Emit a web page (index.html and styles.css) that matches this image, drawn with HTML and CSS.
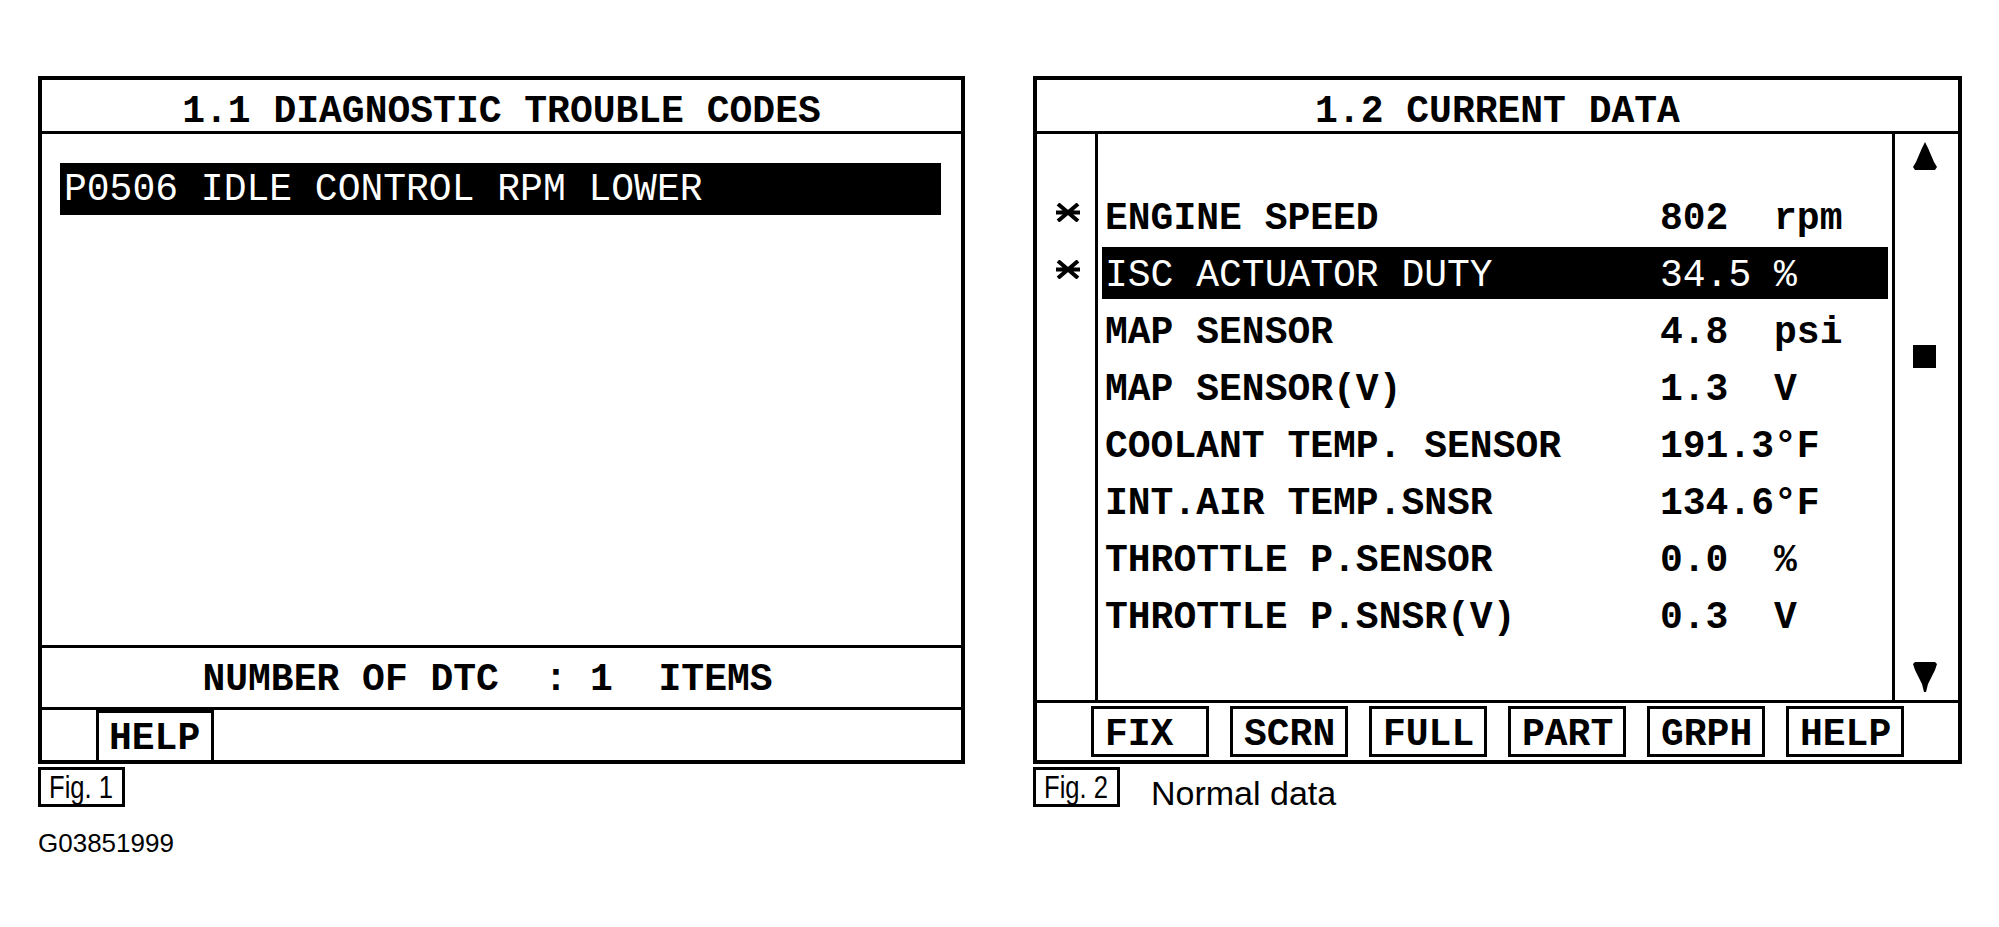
FILE: index.html
```html
<!DOCTYPE html>
<html>
<head>
<meta charset="utf-8">
<title>Scan tool screens</title>
<link rel="stylesheet" href="styles.css">
</head>
<body>
<div class="page">
  <section class="fig fig-left">
    <div class="screen dtc">
      <div class="title">1.1 DIAGNOSTIC TROUBLE CODES</div>
      <div class="dtc-body">
        <div class="dtc-item sel">P0506 IDLE CONTROL RPM LOWER</div>
      </div>
      <div class="dtc-count">NUMBER OF DTC  : 1  ITEMS</div>
      <div class="keys keys-left">
        <span class="key key-left">HELP</span>
      </div>
    </div>
    <div class="caption">
      <span class="fig-tag"><span class="fig-txt">Fig. 1</span></span>
    </div>
    <div class="code">G03851999</div>
  </section>

  <section class="fig fig-right">
    <div class="screen data">
      <div class="title">1.2 CURRENT DATA</div>
      <div class="data-body">
        <div class="marks">
          <div class="mark"><svg class="star" viewBox="0 0 24 19" width="24" height="19"><path d="M2 1 L22 18 M22 1 L2 18 M0 9.5 H24" stroke="#000" stroke-width="4" fill="none"/></svg></div>
          <div class="mark"><svg class="star" viewBox="0 0 24 19" width="24" height="19"><path d="M2 1 L22 18 M22 1 L2 18 M0 9.5 H24" stroke="#000" stroke-width="4" fill="none"/></svg></div>
        </div>
        <div class="rows">
          <div class="row"><span class="lbl">ENGINE SPEED</span><span class="val">802  rpm</span></div>
          <div class="row sel"><span class="lbl">ISC ACTUATOR DUTY</span><span class="val">34.5 %</span></div>
          <div class="row"><span class="lbl">MAP SENSOR</span><span class="val">4.8  psi</span></div>
          <div class="row"><span class="lbl">MAP SENSOR(V)</span><span class="val">1.3  V</span></div>
          <div class="row"><span class="lbl">COOLANT TEMP. SENSOR</span><span class="val">191.3°F</span></div>
          <div class="row"><span class="lbl">INT.AIR TEMP.SNSR</span><span class="val">134.6°F</span></div>
          <div class="row"><span class="lbl">THROTTLE P.SENSOR</span><span class="val">0.0  %</span></div>
          <div class="row"><span class="lbl">THROTTLE P.SNSR(V)</span><span class="val">0.3  V</span></div>
        </div>
        <div class="scroll">
          <svg class="arrow-up" viewBox="0 0 24 28" width="24" height="28"><path d="M12 0 L15 6 L21 20 L24 25 L22 28 L2 28 L0 25 L3 20 L9 6 Z" fill="#000"/></svg>
          <span class="thumb"></span>
          <svg class="arrow-down" viewBox="0 0 24 30" width="24" height="30"><path d="M0 2 L2 0 L22 0 L24 2 L22 8 L15 22 L13 30 L11 30 L9 22 L2 8 Z" fill="#000"/></svg>
        </div>
      </div>
      <div class="keys keys-right">
        <span class="key">FIX</span>
        <span class="key">SCRN</span>
        <span class="key">FULL</span>
        <span class="key">PART</span>
        <span class="key">GRPH</span>
        <span class="key">HELP</span>
      </div>
    </div>
    <div class="caption">
      <span class="fig-tag"><span class="fig-txt">Fig. 2</span></span>
      <span class="caption-text">Normal data</span>
    </div>
  </section>
</div>
</body>
</html>
```

FILE: styles.css
```css
html, body {
  margin: 0;
  padding: 0;
  background: #fff;
  color: #000;
}

body {
  font-family: "Liberation Mono", "Courier New", monospace;
}

.page {
  display: flex;
  align-items: flex-start;
  gap: 68px;
  padding: 76px 0 0 38px;
}

.fig {
  display: flex;
  flex-direction: column;
}

.screen {
  box-sizing: border-box;
  border: 4px solid #000;
  height: 688px;
  display: flex;
  flex-direction: column;
  font-size: 38px;
}

.dtc { width: 927px; }
.data { width: 929px; }

.title {
  box-sizing: border-box;
  height: 54px;
  padding-top: 12px;
  line-height: 39px;
  border-bottom: 3px solid #000;
  text-align: center;
  font-weight: bold;
  white-space: pre;
}

/* left screen */
.dtc-body {
  box-sizing: border-box;
  height: 511px;
  padding: 29px 20px 0 18px;
}

.dtc-item {
  box-sizing: border-box;
  height: 52px;
  padding: 3px 0 0 4px;
  line-height: 47px;
  white-space: pre;
}

.sel {
  background: #000;
  color: #fff;
  font-weight: normal;
}

.dtc-count {
  box-sizing: border-box;
  height: 62px;
  border-top: 3px solid #000;
  padding: 5px 28px 0 0;
  line-height: 54px;
  text-align: center;
  font-weight: bold;
  white-space: pre;
}

.keys {
  box-sizing: border-box;
  border-top: 3px solid #000;
  display: flex;
}

.keys-left {
  height: 53px;
  padding-left: 54px;
}

.key {
  box-sizing: border-box;
  width: 118px;
  border: 3px solid #000;
  font-weight: bold;
  white-space: pre;
}

.key-left {
  height: 50px;
  border-bottom: 0;
  padding: 6px 0 0 10px;
  line-height: 40px;
}

/* right screen */
.data-body {
  height: 566px;
  display: flex;
}

.marks {
  box-sizing: border-box;
  width: 61px;
  border-right: 3px solid #000;
  padding: 56px 0 0 4px;
  display: flex;
  flex-direction: column;
  gap: 5px;
}

.mark {
  box-sizing: border-box;
  height: 52px;
  padding-bottom: 7px;
  display: flex;
  align-items: center;
  justify-content: center;
}

.rows {
  box-sizing: border-box;
  width: 794px;
  padding: 56px 4px 0;
  display: flex;
  flex-direction: column;
  gap: 5px;
}

.row {
  box-sizing: border-box;
  height: 52px;
  padding: 5px 0 0 3px;
  line-height: 47px;
  display: grid;
  grid-template-columns: 555px auto;
  font-weight: bold;
  white-space: pre;
}

.row.sel {
  font-weight: normal;
}

.scroll {
  flex: 1;
  border-left: 3px solid #000;
  display: flex;
  flex-direction: column;
  align-items: center;
  padding-right: 4px;
}

.arrow-up {
  display: block;
  margin-top: 8px;
}

.thumb {
  display: block;
  width: 23px;
  height: 23px;
  background: #000;
  margin-top: 175px;
}

.arrow-down {
  display: block;
  margin-top: auto;
  margin-bottom: 8px;
}

.keys-right {
  height: 60px;
  padding: 3px 0 0 54px;
  gap: 21px;
}

.keys-right .key {
  height: 51px;
  padding: 6px 0 0 11px;
  line-height: 39px;
}

/* captions */
.caption {
  display: flex;
  align-items: flex-start;
  margin-top: 3px;
}

.fig-tag {
  box-sizing: border-box;
  width: 87px;
  height: 40px;
  border: 3px solid #000;
  display: flex;
  align-items: center;
  justify-content: center;
  font-family: "Liberation Sans", Arial, sans-serif;
  font-size: 32px;
  overflow: hidden;
}

.fig-txt {
  display: inline-block;
  transform: scaleX(0.8);
  white-space: pre;
}

.caption-text {
  font-family: "Liberation Sans", Arial, sans-serif;
  font-size: 34px;
  line-height: 40px;
  margin: 6px 0 0 31px;
}

.code {
  font-family: "Liberation Sans", Arial, sans-serif;
  font-size: 26px;
  margin-top: 21px;
}
```
